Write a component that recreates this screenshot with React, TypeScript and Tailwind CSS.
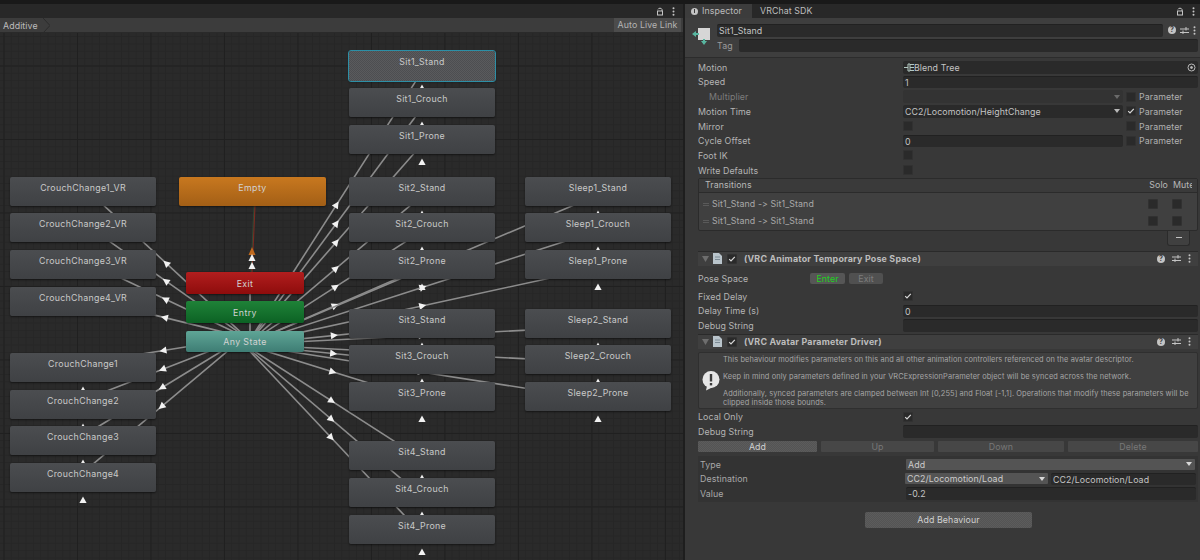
import type { ReactNode } from "react";

type StateNode = { name: string; x: number; y: number };

const NODE_W = 146;
const ANY_X = 245;
const ANY_Y = 341;

const states: StateNode[] = [
  { name: "CrouchChange1_VR", x: 10, y: 177 },
  { name: "CrouchChange2_VR", x: 10, y: 213 },
  { name: "CrouchChange3_VR", x: 10, y: 250 },
  { name: "CrouchChange4_VR", x: 10, y: 287 },
  { name: "CrouchChange1", x: 10, y: 353 },
  { name: "CrouchChange2", x: 10, y: 390 },
  { name: "CrouchChange3", x: 10, y: 426 },
  { name: "CrouchChange4", x: 10, y: 463 },
  { name: "Sit1_Stand", x: 349, y: 51 },
  { name: "Sit1_Crouch", x: 349, y: 88 },
  { name: "Sit1_Prone", x: 349, y: 125 },
  { name: "Sit2_Stand", x: 349, y: 177 },
  { name: "Sit2_Crouch", x: 349, y: 213 },
  { name: "Sit2_Prone", x: 349, y: 250 },
  { name: "Sit3_Stand", x: 349, y: 309 },
  { name: "Sit3_Crouch", x: 349, y: 345 },
  { name: "Sit3_Prone", x: 349, y: 382 },
  { name: "Sit4_Stand", x: 349, y: 441 },
  { name: "Sit4_Crouch", x: 349, y: 478 },
  { name: "Sit4_Prone", x: 349, y: 515 },
  { name: "Sleep1_Stand", x: 525, y: 177 },
  { name: "Sleep1_Crouch", x: 525, y: 213 },
  { name: "Sleep1_Prone", x: 525, y: 250 },
  { name: "Sleep2_Stand", x: 525, y: 309 },
  { name: "Sleep2_Crouch", x: 525, y: 345 },
  { name: "Sleep2_Prone", x: 525, y: 382 },
];

function Transitions() {
  return (
    <svg className="absolute left-0 top-0" width={683} height={527} viewBox="0 33 683 527">
      {states.map((s) => {
        const tx = s.x + NODE_W / 2;
        const ty = s.y + 14;
        const len = Math.hypot(tx - ANY_X, ty - ANY_Y);
        const ux = (tx - ANY_X) / len;
        const uy = (ty - ANY_Y) / len;
        const ox = -uy * 3.5;
        const oy = ux * 3.5;
        const mx = (tx + ANY_X) / 2 + ox;
        const my = (ty + ANY_Y) / 2 + oy;
        const tip = `${mx + ux * 4},${my + uy * 4}`;
        const b1 = `${mx - ux * 3 - uy * 3.6},${my - uy * 3 + ux * 3.6}`;
        const b2 = `${mx - ux * 3 + uy * 3.6},${my - uy * 3 - ux * 3.6}`;
        return (
          <g key={s.name}>
            <line x1={ANY_X + ox} y1={ANY_Y + oy} x2={tx + ox} y2={ty + oy} stroke="#8c8c8c" strokeWidth={1.6} />
            <polygon points={`${tip} ${b1} ${b2}`} fill="#f2f2f2" />
            {!s.name.endsWith("_VR") && (
              <polygon
                points={`${tx},${s.y + 33.5} ${tx + 3.6},${s.y + 40} ${tx - 3.6},${s.y + 40}`}
                fill="#f2f2f2"
              />
            )}
          </g>
        );
      })}
      <line x1={250} y1={294} x2={250} y2={331} stroke="#8c8c8c" strokeWidth={1.6} />
      <line x1={255} y1={205} x2={252} y2={272} stroke="#7c2a22" strokeWidth={1.2} />
      <line x1={254} y1={205} x2={251} y2={272} stroke="#2f6b45" strokeWidth={0.5} />
      <polygon points="252,247 255.5,255 248.5,255" fill="#c06a1e" />
      <polygon points="252,254 255.5,261 248.5,261" fill="#f2f2f2" />
      <polygon points="252,262 255.5,269 248.5,269" fill="#f2f2f2" />
    </svg>
  );
}

function Node({ s }: { s: StateNode }) {
  const selected = s.name === "Sit1_Stand";
  return (
    <div
      style={{ left: s.x, top: s.y - 33 }}
      className={
        "absolute w-[146px] rounded-[2px] pt-[4px] text-center text-[8.8px] tracking-[0.3px] text-[#c9c9c9] shadow-[0_1px_2px_rgba(0,0,0,0.5)] " +
        (selected
          ? "h-[30px] outline outline-[1.5px] outline-[#2d8fa6] bg-[repeating-conic-gradient(#5a5b5d_0_25%,#4d4e51_0_50%)] bg-[size:2px_2px]"
          : "h-[29px] bg-[linear-gradient(#4b4d50,#3f4144)]")
      }
    >
      {s.name}
    </div>
  );
}

function SpecialNode({ label, className }: { label: string; className: string }) {
  return (
    <div
      className={
        "absolute rounded-[2px] text-center text-[8.8px] tracking-[0.4px] text-[#d2d2d2] shadow-[0_1px_2px_rgba(0,0,0,0.5)] " +
        className
      }
    >
      {label}
    </div>
  );
}

function LockIcon() {
  return (
    <svg width="8" height="9" viewBox="0 0 8 9" fill="none" stroke="#c4c4c4" strokeWidth="1">
      <rect x="1.5" y="4" width="5" height="4" />
      <path d="M2 2.4C2.4 .8 5.6 .8 6 2.4V4" />
    </svg>
  );
}

function Kebab() {
  return (
    <svg width="3" height="9" viewBox="0 0 3 9" fill="#c4c4c4">
      <circle cx="1.5" cy="1.2" r="1" />
      <circle cx="1.5" cy="4.5" r="1" />
      <circle cx="1.5" cy="7.8" r="1" />
    </svg>
  );
}

function WindowIcons() {
  return (
    <div className="flex items-center gap-[8px]">
      <LockIcon />
      <Kebab />
    </div>
  );
}

function ComponentIcons({ wide }: { wide?: boolean }) {
  return (
    <div className={"flex items-center " + (wide ? "gap-[7px]" : "gap-[4px]")}>
      <div className="w-[8px] h-[8px] rounded-full bg-[#c4c4c4] text-[7px] leading-[8px] font-bold text-center text-[#3c3c3c]">
        ?
      </div>
      <svg width="9" height="9" viewBox="0 0 9 9" stroke="#c4c4c4" strokeWidth="1">
        <path d="M0 3H9M0 6.5H9M6 1V4.5M3 4.5V8" />
      </svg>
      <Kebab />
    </div>
  );
}

function Row({ label, children, dim }: { label: string; children?: ReactNode; dim?: boolean }) {
  return (
    <div className="flex items-center h-[14.7px]">
      <div className={"w-[205px] shrink-0 " + (dim ? "pl-[11px] text-[#7d7d7d]" : "text-[#b4b4b4]")}>{label}</div>
      <div className="flex-1 flex items-center min-w-0">{children}</div>
    </div>
  );
}

function Field({ value, className = "" }: { value?: string; className?: string }) {
  return (
    <div
      className={
        "h-[12.5px] rounded-[2px] bg-[#2a2a2a] border-t border-[#212121] pl-[2px] leading-[11px] text-[#c4c4c4] truncate " +
        className
      }
    >
      {value}
    </div>
  );
}

function Check({ on, className = "" }: { on?: boolean; className?: string }) {
  return (
    <div className={"w-[10px] h-[10px] shrink-0 rounded-[1px] bg-[#2a2a2a] border border-[#313131] " + className}>
      {on && (
        <svg width="8" height="8" viewBox="0 0 8 8" fill="none" stroke="#d8d8d8" strokeWidth="1.2">
          <path d="M1.2 4.2L3 6L6.8 1.8" />
        </svg>
      )}
    </div>
  );
}

function Param({ on }: { on?: boolean }) {
  return (
    <div className="w-[75px] shrink-0 flex items-center gap-[3px] pl-[3px] text-[#b0b0b0]">
      <Check on={on} />
      Parameter
    </div>
  );
}

function SelectArrow({ color = "#b8b8b8" }: { color?: string }) {
  return (
    <svg width="6" height="4" viewBox="0 0 6 4" className="ml-auto mr-[3px] shrink-0" fill={color}>
      <path d="M0 0H6L3 4Z" />
    </svg>
  );
}

function ComponentHeader({ title }: { title: string }) {
  return (
    <div className="h-[15px] flex items-center bg-[#3f3f3f] border-t border-[#2a2a2a] pl-[4px] pr-[7px] font-bold text-[8.9px] tracking-[0.2px] text-[#bdbdbd]">
      <svg width="7" height="6" viewBox="0 0 7 6" fill="#6e6e6e" className="mr-[4px]">
        <path d="M0 0H7L3.5 6Z" />
      </svg>
      <svg width="9" height="11" viewBox="0 0 9 11" className="mr-[5px]">
        <path d="M0 0H6L9 3V11H0Z" fill="#b9c4cb" />
        <path d="M2 4H7M2 6.5H7" stroke="#7b8a94" />
      </svg>
      <Check on className="mr-[7px]" />
      <span>{title}</span>
      <div className="ml-auto">
        <ComponentIcons wide />
      </div>
    </div>
  );
}

function Inspector() {
  return (
    <div className="w-[515px] shrink-0 flex flex-col bg-[#383838] text-[8.8px] tracking-[0.1px]">
      <div className="h-[14px] flex items-center bg-[#282828] pr-[5px]">
        <div className="h-full w-[67px] flex items-center gap-[4px] pl-[6px] bg-[#3c3c3c] text-[#bdbdbd]">
          <div className="relative w-[7px] h-[7px] rounded-full bg-[#c4c4c4]">
            <div className="absolute left-[3px] top-[1.5px] w-[1px] h-[4px] bg-[#3c3c3c]" />
          </div>
          Inspector
        </div>
        <div className="ml-[8px] text-[#bdbdbd]">VRChat SDK</div>
        <div className="ml-auto">
          <WindowIcons />
        </div>
      </div>

      <div className="h-[40px] flex bg-[#3e3e3e] border-b border-[#2c2c2c] pl-[7px] pr-[2px] pt-[6px]">
        <svg width="20" height="20" viewBox="0 0 20 20" className="shrink-0 mt-[2px]">
          <rect x="6" y="2" width="12" height="12" fill="#d6d6d6" />
          <path d="M0 8L4 5V7H7V9H4V11Z" fill="#58b6a0" />
          <path d="M12 19L9 15H11V13H13V15H15Z" fill="#58b6a0" />
        </svg>
        <div className="flex-1 ml-[5px] flex flex-col">
          <div className="flex items-center">
            <Field value="Sit1_Stand" className="w-[446px]" />
            <div className="ml-[5px]">
              <ComponentIcons />
            </div>
          </div>
          <div className="flex items-center mt-[2.5px]">
            <span className="w-[22px] text-[#9a9a9a]">Tag</span>
            <Field className="flex-1" />
          </div>
        </div>
      </div>

      <div className="pl-[13px] pr-[2px] pt-[2px]">
        <Row label="Motion">
          <div className="flex-1 h-[12.5px] rounded-[2px] bg-[#2a2a2a] pl-[1px] flex items-center text-[#c4c4c4]">
            <svg width="10" height="9" viewBox="0 0 10 9" fill="none" stroke="#b4c9c2" className="shrink-0">
              <path d="M0 4.5H4M4 1H6V8H4ZM6 1.5H10M6 4.5H10M6 7.5H10" />
            </svg>
            <span>Blend Tree</span>
            <svg width="9" height="9" viewBox="0 0 9 9" fill="none" stroke="#b8b8b8" className="ml-auto mr-[2px]">
              <circle cx="4.5" cy="4.5" r="3.5" />
              <circle cx="4.5" cy="4.5" r="1" fill="#b8b8b8" />
            </svg>
          </div>
        </Row>
        <Row label="Speed">
          <Field value="1" className="flex-1" />
        </Row>
        <Row label="Multiplier" dim>
          <div className="flex-1 h-[12.5px] rounded-[2px] bg-[#333333] flex items-center">
            <SelectArrow color="#6a6a6a" />
          </div>
          <Param />
        </Row>
        <Row label="Motion Time">
          <div className="flex-1 h-[12.5px] rounded-[2px] bg-[#2a2a2a] pl-[2px] flex items-center text-[#c4c4c4]">
            CC2/Locomotion/HeightChange
            <SelectArrow />
          </div>
          <Param on />
        </Row>
        <Row label="Mirror">
          <Check />
          <div className="ml-auto">
            <Param />
          </div>
        </Row>
        <Row label="Cycle Offset">
          <Field value="0" className="flex-1" />
          <Param />
        </Row>
        <Row label="Foot IK">
          <Check />
        </Row>
        <Row label="Write Defaults">
          <Check />
        </Row>

        <div className="h-[53px] rounded-[2px] border border-[#2b2b2b] bg-[#404040]">
          <div className="h-[14px] flex items-center bg-[#3a3a3a] border-b border-[#2b2b2b] pl-[6px] text-[#b8b8b8] overflow-hidden">
            Transitions
            <span className="ml-auto">Solo</span>
            <span className="ml-[5px] w-[19px] overflow-hidden shrink-0">Mute</span>
            <span className="w-[5px] shrink-0" />
          </div>
          {[0, 1].map((i) => (
            <div key={i} className={"flex items-center h-[17px] pl-[4px] text-[#a8a8a8] " + (i === 0 ? "mt-[3px]" : "")}>
              <div className="w-[6px] h-[3px] border-y border-[#5a5a5a] mr-[3px]" />
              Sit1_Stand {"->"} Sit1_Stand
              <Check className="ml-auto" />
              <Check className="ml-[14px] mr-[15px]" />
            </div>
          ))}
        </div>
        <div className="flex justify-end pr-[8px]">
          <div className="w-[23px] h-[15px] rounded-b-[3px] border border-t-0 border-[#2b2b2b] bg-[#404040] flex items-center justify-center">
            <div className="w-[6px] h-[1.5px] bg-[#c4c4c4]" />
          </div>
        </div>

        <div className="mt-[5px]">
          <ComponentHeader title="(VRC Animator Temporary Pose Space)" />
        </div>
        <div className="flex items-center h-[14px] mt-[6px]">
          <div className="w-[112px] shrink-0 pt-[1px] text-[#b4b4b4]">Pose Space</div>
          <div className="w-[35px] h-[11px] rounded-[2px] bg-[#565656] text-center leading-[11px] text-[#1fd01f]">Enter</div>
          <div className="ml-[4px] w-[34px] h-[11px] rounded-[2px] bg-[#505050] text-center leading-[11px] text-[#7d7d7d]">Exit</div>
        </div>
        <div className="mt-[3.5px]">
          <Row label="Fixed Delay">
            <Check on />
          </Row>
          <Row label="Delay Time (s)">
            <Field value="0" className="flex-1" />
          </Row>
          <Row label="Debug String">
            <Field className="flex-1" />
          </Row>
        </div>

        <div className="mt-[0.5px]">
          <ComponentHeader title="(VRC Avatar Parameter Driver)" />
        </div>
        <div className="mt-[3px] h-[57px] rounded-[2px] border border-[#2f2f2f] bg-[#404040] flex text-[7.4px] tracking-[0.1px] text-[#a6a6a6]">
          <svg width="18" height="20" viewBox="0 0 18 20" className="ml-[3px] mt-[18px] shrink-0">
            <path d="M5 15L4 19.5L11 16Z" fill="#e6e6e6" />
            <circle cx="9" cy="8.5" r="8.5" fill="#e6e6e6" />
            <rect x="7.8" y="3" width="2.4" height="7.5" fill="#3c3c3c" />
            <rect x="7.8" y="12" width="2.4" height="2.4" fill="#3c3c3c" />
          </svg>
          <div className="ml-[3px] pt-[2.5px] leading-[9px]">
            <div>This behaviour modifies parameters on this and all other animation controllers referenced on the avatar descriptor.</div>
            <div className="mt-[8px]">Keep in mind only parameters defined in your VRCExpressionParameter object will be synced across the network.</div>
            <div className="mt-[8px] whitespace-nowrap">Additionally, synced parameters are clamped between Int [0,255] and Float [-1,1]. Operations that modify these parameters will be</div>
            <div>clipped inside those bounds.</div>
          </div>
        </div>

        <div className="mt-[1px]">
          <Row label="Local Only">
            <Check on />
          </Row>
          <Row label="Debug String">
            <Field className="flex-1" />
          </Row>
        </div>

        <div className="mt-[2px] flex gap-[4px] h-[11px] text-center leading-[11px]">
          <div className="w-[119px] rounded-[1px] bg-[repeating-conic-gradient(#5c5c5c_0_25%,#545454_0_50%)] bg-[size:2px_2px] text-[#d0d0d0]">Add</div>
          <div className="w-[113px] rounded-[1px] bg-[#474747] text-[#777777]">Up</div>
          <div className="w-[126px] rounded-[1px] bg-[#474747] text-[#777777]">Down</div>
          <div className="flex-1 rounded-[1px] bg-[#474747] text-[#777777]">Delete</div>
        </div>

        <div className="mt-[4px] h-[46px] bg-[#333333] pl-[2px] pr-[2px] pt-[1px]">
          <div className="flex items-center h-[14.7px]">
            <div className="w-[206px] shrink-0 text-[#a8a8a8]">Type</div>
            <div className="flex-1 h-[11px] rounded-[1px] bg-[#545454] pl-[2px] mr-[1px] flex items-center text-[#cccccc]">
              Add
              <SelectArrow color="#d8d8d8" />
            </div>
          </div>
          <div className="flex items-center h-[14.7px]">
            <div className="w-[205px] shrink-0 text-[#a8a8a8]">Destination</div>
            <div className="w-[143px] shrink-0 h-[11px] rounded-[1px] bg-[#545454] pl-[2px] flex items-center text-[#cccccc]">
              CC2/Locomotion/Load
              <SelectArrow color="#d8d8d8" />
            </div>
            <Field value="CC2/Locomotion/Load" className="flex-1 ml-[3px]" />
          </div>
          <div className="flex items-center h-[14.7px]">
            <div className="w-[206px] shrink-0 text-[#a8a8a8]">Value</div>
            <Field value="-0.2" className="flex-1" />
          </div>
        </div>

        <div className="mt-[10px] ml-[167px] w-[167px] h-[16px] rounded-[2px] bg-[repeating-conic-gradient(#5c5c5c_0_25%,#545454_0_50%)] bg-[size:2px_2px] text-center leading-[15px] text-[#d0d0d0]">
          Add Behaviour
        </div>
      </div>
    </div>
  );
}

export default function App() {
  return (
    <div className="relative w-[1200px] h-[560px] overflow-hidden flex flex-col bg-[#191919] font-['Inter',sans-serif]">
      <div className="h-[4px] shrink-0" />
      <div className="flex flex-1 min-h-0">
        <div className="w-[683px] shrink-0 flex flex-col text-[8.8px] tracking-[0.1px]">
          <div className="h-[14px] shrink-0 flex items-center justify-end bg-[#282828] pr-[8px]">
            <WindowIcons />
          </div>
          <div className="h-[15px] shrink-0 flex items-center justify-between bg-[#3c3c3c] border-b border-[#2a2a2a] text-[#bdbdbd]">
            <div className="relative h-full flex items-center pl-[3px] pr-[5px] pt-[1px]">
              Additive
              <svg width="7" height="15" viewBox="0 0 7 15" fill="none" stroke="#2b2b2b" className="absolute right-[-7px] top-0">
                <path d="M0 0L7 7.5L0 15" />
              </svg>
            </div>
            <div className="h-full w-[67px] mr-[2px] bg-[#4c4c4c] text-center leading-[14px] text-[#b4b4b4]">Auto Live Link</div>
          </div>
          <div className="relative flex-1 overflow-hidden bg-[#2a2a2a] bg-[linear-gradient(#202020_1px,transparent_1px),linear-gradient(90deg,#202020_1px,transparent_1px),linear-gradient(#262626_1px,transparent_1px),linear-gradient(90deg,#262626_1px,transparent_1px)] bg-[size:73.5px_73.5px,73.5px_73.5px,7.35px_7.35px,7.35px_7.35px] bg-[position:3.5px_32.5px,3.5px_32.5px,3.5px_32.5px,3.5px_32.5px]">
            <Transitions />
            {states.map((s) => (
              <Node key={s.name} s={s} />
            ))}
            <SpecialNode
              label="Empty"
              className="left-[179px] top-[144px] w-[147px] h-[29px] pt-[4px] bg-[linear-gradient(#c8781f,#a35f16)]"
            />
            <SpecialNode
              label="Exit"
              className="left-[186px] top-[239px] w-[118px] h-[22px] pt-[5px] bg-[linear-gradient(#b21e1e,#8e0c0c)]"
            />
            <SpecialNode
              label="Entry"
              className="left-[186px] top-[268px] w-[118px] h-[22px] pt-[4.5px] bg-[linear-gradient(#1f8238,#0c6224)]"
            />
            <SpecialNode
              label="Any State"
              className="left-[186px] top-[298px] w-[118px] h-[21px] pt-[4px] bg-[linear-gradient(#5fa596,#3e7d74)]"
            />
          </div>
        </div>
        <div className="w-[2px] shrink-0 bg-[#1e1e1e]" />
        <Inspector />
      </div>
    </div>
  );
}
